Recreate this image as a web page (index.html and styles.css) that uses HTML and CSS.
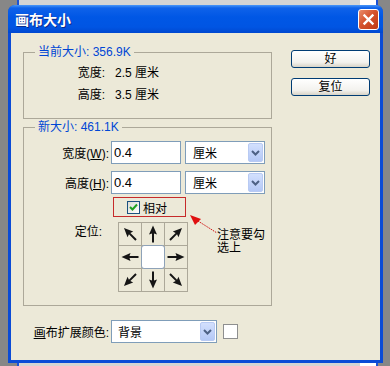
FILE: index.html
```html
<!DOCTYPE html>
<html lang="zh-CN">
<head>
  <meta charset="UTF-8">
  <title>画布大小</title>
  <link rel="stylesheet" href="styles.css">
</head>
<body>
  <div class="backwin"></div>
  <div class="window">
    <div class="titlebar">
      <span class="title">画布大小</span>
      <span class="close">
        <svg width="19" height="19" viewBox="0 0 19 19"><path d="M5.5 5.5 L13.5 13.5 M13.5 5.5 L5.5 13.5" stroke="#fff" stroke-width="2.4" stroke-linecap="square"/></svg>
      </span>
    </div>
    <div class="dlg">
      <div class="left">
        <fieldset class="group current">
          <legend>当前大小: 356.9K</legend>
          <div class="info-row"><span class="lbl">宽度:</span><span class="val">2.5 厘米</span></div>
          <div class="info-row"><span class="lbl">高度:</span><span class="val">3.5 厘米</span></div>
        </fieldset>

        <fieldset class="group newsize">
          <legend>新大小: 461.1K</legend>
          <div class="field-row">
            <label class="lbl" for="w">宽度(<u>W</u>):</label>
            <input class="textbox" id="w" type="text" value="0.4">
            <div class="combo unit"><span>厘米</span><span class="drop"><svg width="9" height="6" viewBox="0 0 9 6"><path d="M1 1 L4.5 4.5 L8 1" fill="none" stroke="#4d6185" stroke-width="2"/></svg></span></div>
          </div>
          <div class="field-row">
            <label class="lbl" for="h">高度(<u>H</u>):</label>
            <input class="textbox" id="h" type="text" value="0.4">
            <div class="combo unit"><span>厘米</span><span class="drop"><svg width="9" height="6" viewBox="0 0 9 6"><path d="M1 1 L4.5 4.5 L8 1" fill="none" stroke="#4d6185" stroke-width="2"/></svg></span></div>
          </div>
          <div class="rel-row">
            <div class="relbox">
              <span class="check"><svg width="11" height="11" viewBox="0 0 11 11"><path d="M2 5 L4.5 7.5 L9 2.5" fill="none" stroke="#21a121" stroke-width="2"/></svg></span>相对
            </div>
          </div>
          <div class="anchor-row">
            <span class="lbl">定位:</span>
            <div class="anchor">
              <div class="cell"><svg width="22" height="22" viewBox="0 0 22 22"><path class="arr" d="M11 2.5 L15 11.5 L12 10.5 V19.5 H10 V10.5 L7 11.5 Z" transform="rotate(-45 11 11)"/></svg></div>
              <div class="cell"><svg width="22" height="22" viewBox="0 0 22 22"><path class="arr" d="M11 2.5 L15 11.5 L12 10.5 V19.5 H10 V10.5 L7 11.5 Z"/></svg></div>
              <div class="cell"><svg width="22" height="22" viewBox="0 0 22 22"><path class="arr" d="M11 2.5 L15 11.5 L12 10.5 V19.5 H10 V10.5 L7 11.5 Z" transform="rotate(45 11 11)"/></svg></div>
              <div class="cell"><svg width="22" height="22" viewBox="0 0 22 22"><path class="arr" d="M11 2.5 L15 11.5 L12 10.5 V19.5 H10 V10.5 L7 11.5 Z" transform="rotate(-90 11 11)"/></svg></div>
              <div class="cell center"></div>
              <div class="cell"><svg width="22" height="22" viewBox="0 0 22 22"><path class="arr" d="M11 2.5 L15 11.5 L12 10.5 V19.5 H10 V10.5 L7 11.5 Z" transform="rotate(90 11 11)"/></svg></div>
              <div class="cell"><svg width="22" height="22" viewBox="0 0 22 22"><path class="arr" d="M11 2.5 L15 11.5 L12 10.5 V19.5 H10 V10.5 L7 11.5 Z" transform="rotate(-135 11 11)"/></svg></div>
              <div class="cell"><svg width="22" height="22" viewBox="0 0 22 22"><path class="arr" d="M11 2.5 L15 11.5 L12 10.5 V19.5 H10 V10.5 L7 11.5 Z" transform="rotate(180 11 11)"/></svg></div>
              <div class="cell"><svg width="22" height="22" viewBox="0 0 22 22"><path class="arr" d="M11 2.5 L15 11.5 L12 10.5 V19.5 H10 V10.5 L7 11.5 Z" transform="rotate(135 11 11)"/></svg></div>
            </div>
          </div>
        </fieldset>

        <div class="field-row ext">
          <label class="lbl"><u>画</u>布扩展颜色:</label>
          <div class="combo bg"><span>背景</span><span class="drop"><svg width="9" height="6" viewBox="0 0 9 6"><path d="M1 1 L4.5 4.5 L8 1" fill="none" stroke="#4d6185" stroke-width="2"/></svg></span></div>
          <span class="swatch"></span>
        </div>
      </div>

      <div class="buttons">
        <button type="button">好</button>
        <button type="button">复位</button>
      </div>

      <!-- annotation drawn over the dialog -->
      <svg class="callout-arrow" width="36" height="30" viewBox="0 0 36 30">
        <path d="M5 5 L16 9 L10 15 Z" fill="#e01010"/>
        <path d="M13 11 L32 23" stroke="#d01010" stroke-width="1" stroke-dasharray="1.5 1"/>
      </svg>
      <div class="callout">注意要勾<br>选上</div>
    </div>
  </div>
</body>
</html>
```

FILE: styles.css
```css
body {
  margin: 0;
  height: 366px;
  overflow: hidden;
  position: relative;
  background: #878787;
  font-family: "Liberation Sans", "Noto Sans CJK SC", sans-serif;
  font-size: 12px;
  color: #000;
}

/* window sitting behind the dialog */
.backwin {
  position: absolute;
  left: 17px;
  top: -20px;
  width: 357px;
  height: 400px;
  border: 2px solid #1a52d6;
  background: linear-gradient(to right, #d4d4d4 0, #d4d4d4 341px, #fff 341px);
}

.window {
  position: relative;
  margin: 5px 0 0 8px;
  width: 375px;
  height: 358px;
  box-sizing: border-box;
  padding: 0 3px 3px;
  background: #0b4bd6;
  border-radius: 7px 7px 0 0;
  display: flex;
  flex-direction: column;
}

.titlebar {
  height: 28px;
  margin: 0 -3px;
  padding: 0 4px 0 7px;
  display: flex;
  align-items: center;
  justify-content: space-between;
  border-radius: 7px 7px 0 0;
  background: linear-gradient(#4a97f8 0, #0f62ea 3px, #0057e5 12px, #0055e3 22px, #0048d0 28px);
}

.title {
  color: #fff;
  font-weight: bold;
  font-size: 14px;
  text-shadow: 1px 1px #0b2a8a;
}

.close {
  width: 21px;
  height: 21px;
  box-sizing: border-box;
  border: 1px solid #fff;
  border-radius: 3px;
  background: linear-gradient(135deg, #e98d6c 0, #d5532e 45%, #bf3a14 100%);
  display: flex;
  align-items: center;
  justify-content: center;
}

.dlg {
  flex: 1;
  position: relative;
  display: flex;
  align-items: flex-start;
  padding: 12px 0 0 12px;
  background: #ece9d8;
}

.left {
  width: 249px;
}

.group {
  margin: 0;
  padding: 3px 0 12px;
  width: 249px;
  min-width: 0;
  box-sizing: border-box;
  border: 1px solid #aca899;
}

.group legend {
  margin-left: 11px;
  padding: 0 3px;
  line-height: 14px;
  color: #0046d5;
}

.newsize {
  margin-top: 1px;
  padding: 7px 0 13px;
}

.lbl {
  flex: none;
  box-sizing: border-box;
  width: 85px;
  margin-right: 2px;
  text-align: right;
}

.info-row {
  display: flex;
  line-height: 22px;
}

.info-row .lbl {
  padding-right: 4px;
}

.info-row .val {
  margin-left: 4px;
}

.field-row {
  display: flex;
  align-items: center;
  height: 23px;
}

.field-row + .field-row {
  margin-top: 7px;
}

.textbox {
  width: 70px;
  height: 23px;
  box-sizing: border-box;
  margin: 0;
  padding: 0 2px;
  border: 1px solid #7f9db9;
  font-family: "Liberation Sans", sans-serif;
  font-size: 13px;
  color: #000;
}

.combo {
  width: 80px;
  height: 23px;
  margin-left: 4px;
  box-sizing: border-box;
  padding: 0 1px 0 7px;
  border: 1px solid #7f9db9;
  background: #fff;
  display: flex;
  align-items: center;
  justify-content: space-between;
}

.drop {
  width: 15px;
  height: 19px;
  box-sizing: border-box;
  border: 1px solid #b8caf3;
  border-radius: 2px;
  background: linear-gradient(#d3e0fd, #b4c8f6);
  display: flex;
  align-items: center;
  justify-content: center;
}

.rel-row {
  margin-top: 3px;
  padding-left: 89px;
}

.relbox {
  width: 73px;
  height: 20px;
  box-sizing: border-box;
  padding-left: 13px;
  border: 1px solid #c62a2a;
  display: flex;
  align-items: center;
  gap: 3px;
}

.check {
  width: 13px;
  height: 13px;
  box-sizing: border-box;
  border: 1px solid #1c5180;
  background: linear-gradient(135deg, #dcdcd4, #fff);
  display: flex;
  align-items: center;
  justify-content: center;
}

.anchor-row {
  margin-top: 5px;
  display: flex;
  align-items: flex-start;
}

.anchor-row .lbl {
  padding-right: 7px;
  margin-right: 9px;
  line-height: 20px;
}

.anchor {
  display: grid;
  grid-template-columns: repeat(3, 22px);
  grid-auto-rows: 22px;
  gap: 1px;
  padding: 1px;
  background: #aca899;
}

.cell {
  background: #ece9d8;
  display: flex;
  align-items: center;
  justify-content: center;
}

.cell.center {
  margin: -1px;
  background: #fff;
  border: 1px solid #8ea2b8;
  border-radius: 3px;
}

.arr {
  fill: #151515;
}

.ext {
  margin-top: 14px;
}

.ext .lbl {
  width: 86px;
}

.combo.bg {
  width: 106px;
  margin-left: 0;
  padding-left: 6px;
}

.swatch {
  width: 13px;
  height: 13px;
  margin-left: 6px;
  border: 1px solid #8e8f8f;
  background: #fff;
}

.buttons {
  margin: 5px 0 0 19px;
  display: flex;
  flex-direction: column;
  gap: 10px;
}

.buttons button {
  width: 79px;
  height: 18px;
  padding: 0;
  border: 1px solid #003c74;
  border-radius: 3px;
  background: linear-gradient(#ffffff, #f3f2ee 70%, #d8d3c7);
  font-family: "Liberation Sans", "Noto Sans CJK SC", sans-serif;
  font-size: 12px;
  line-height: 16px;
  color: #000;
}

.callout-arrow {
  position: absolute;
  left: 174px;
  top: 177px;
}

.callout {
  position: absolute;
  left: 206px;
  top: 196px;
  line-height: 13px;
}
```
